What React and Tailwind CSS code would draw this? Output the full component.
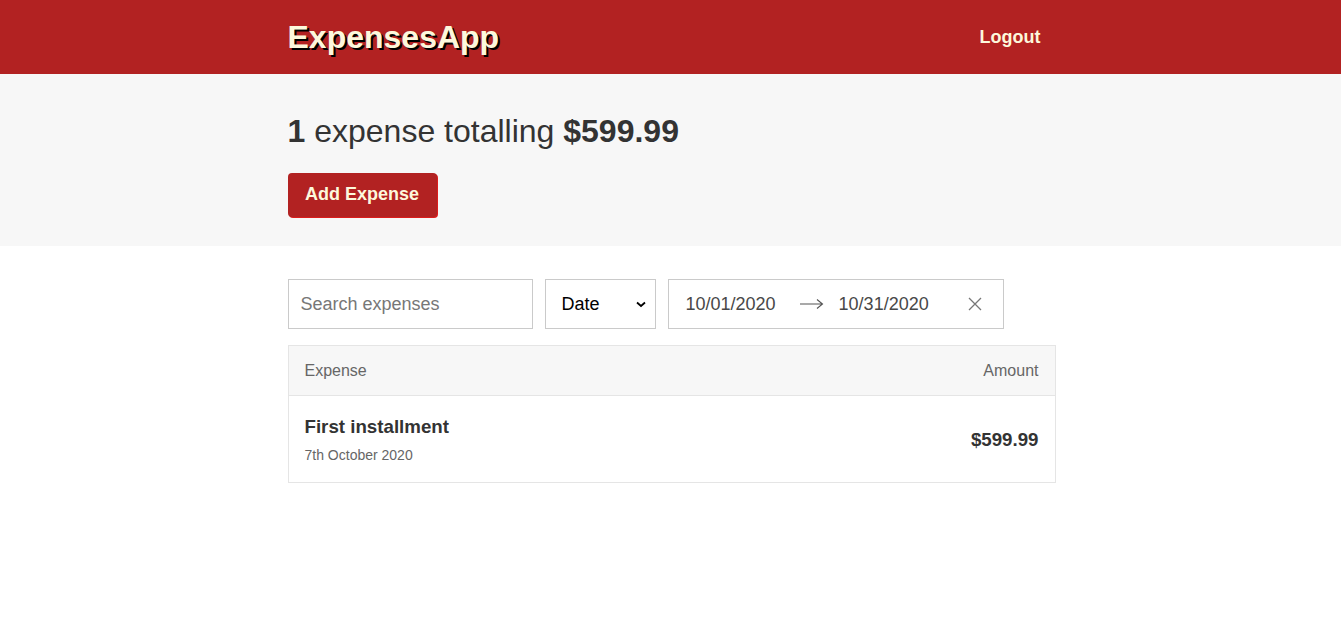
import React from 'react';

const font = { fontFamily: '"Liberation Sans", Arial, sans-serif' };

// content column: 768px wide, nudged so it starts at x=288
const wrap = 'max-w-[770px] mx-auto pl-[2px]';

const Header = () => (
  <header className="bg-[#b22222] h-[74px]">
    <div className={`${wrap} h-full flex items-center justify-between`}>
      <h1 className="text-[32px] font-bold text-[#fdf8dc] [text-shadow:2px_2px_0_#000] leading-none">
        ExpensesApp
      </h1>
      <button className="text-[18px] font-bold text-[#fdf8dc] pl-4 pr-[15px] py-2">Logout</button>
    </div>
  </header>
);

const Summary = () => (
  <div className="bg-[#f7f7f7] h-[172px]">
    <div className="max-w-[770px] mx-auto pl-[2px] pt-[37px]">
      <h2 className="text-[32px] text-[#333] leading-[40px]">
        <span className="font-bold">1</span> expense totalling <span className="font-bold">$599.99</span>
      </h2>
      <button className="mt-[22px] h-[44px] w-[149px] pb-[1px] bg-[#b22222] text-[#fdf8dc] text-[18px] font-bold rounded-[4px] shadow-[1px_1px_0_#dd1c1c]">
        Add Expense
      </button>
    </div>
  </div>
);

const Filters = () => (
  <div className="flex gap-3 h-[50px]">
    <input
      placeholder="Search expenses"
      className="w-[245px] h-full border border-[#cacaca] px-3 text-[18px] text-[#333] placeholder:text-[#777] outline-none"
    />
    <div className="w-[111px] h-full border border-[#cacaca] flex items-center justify-between pl-4 pr-[9px] text-[18px] text-black">
      <span>Date</span>
      <svg width="10" height="7" viewBox="0 0 10 7"><path d="M1 1.5 L5 5 L9 1.5" stroke="#000" strokeWidth="1.8" fill="none" /></svg>
    </div>
    <div className="w-[336px] h-full border border-[#cacaca] flex items-center pl-[17px] text-[18px] text-[#484848]">
      <span>10/01/2020</span>
      <svg className="ml-[24px]" width="24" height="12" viewBox="0 0 24 12">
        <path d="M0 6 H22 M17 1.5 L22.5 6 L17 10.5" stroke="#555" strokeWidth="1.1" fill="none" />
      </svg>
      <span className="ml-[15px]">10/31/2020</span>
      <svg className="ml-[38px]" width="16" height="16" viewBox="0 0 16 16">
        <path d="M2 2 L14 14 M14 2 L2 14" stroke="#777" strokeWidth="1.3" />
      </svg>
    </div>
  </div>
);

const ExpenseTable = () => (
  <div className="mt-[16px] border border-[#e5e5e5]">
    <div className="bg-[#f7f7f7] h-[50px] flex items-center justify-between px-4 text-[16px] text-[#666] border-b border-[#e5e5e5]">
      <span>Expense</span>
      <span>Amount</span>
    </div>
    <div className="h-[86px] flex items-center justify-between px-4 pt-[2px]">
      <div>
        <h3 className="text-[18.72px] font-bold text-[#333] leading-6">First installment</h3>
        <span className="block mt-[6px] text-[14px] text-[#666]">7th October 2020</span>
      </div>
      <h3 className="text-[18.72px] font-bold text-[#333]">$599.99</h3>
    </div>
  </div>
);

export default function App() {
  return (
    <div style={font} className="min-h-screen bg-white">
      <Header />
      <Summary />
      <div className={`${wrap} pt-[33px]`}>
        <Filters />
        <ExpenseTable />
      </div>
    </div>
  );
}
